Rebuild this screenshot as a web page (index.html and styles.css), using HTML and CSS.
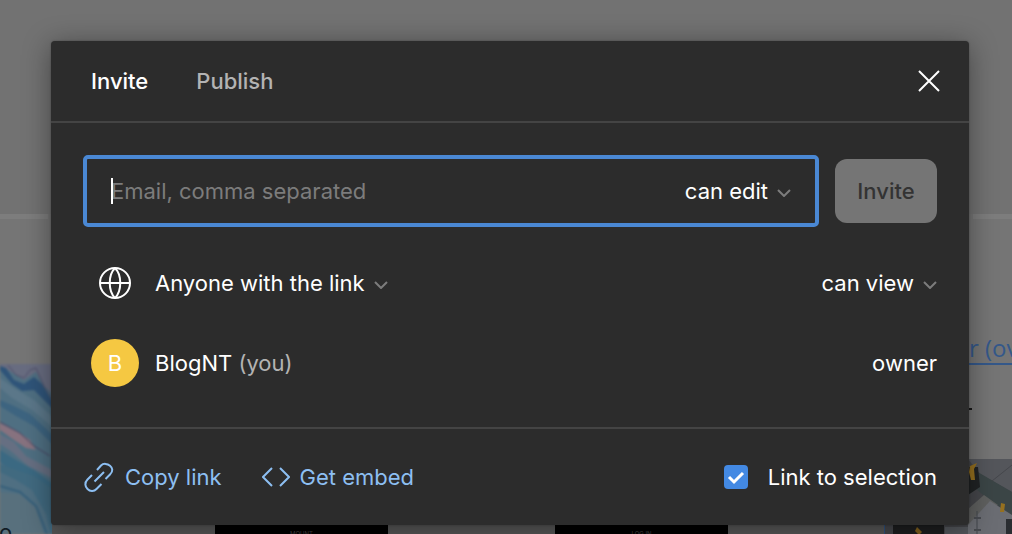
FILE: index.html
```html
<!DOCTYPE html>
<html lang="en">
<head>
<meta charset="utf-8">
<title>Share</title>
<link rel="stylesheet" href="styles.css">
</head>
<body>
<div class="canvas">
  <svg class="artwork artwork-left" width="60" height="170" viewBox="0 0 60 170" aria-hidden="true">
    <rect width="60" height="170" fill="#4f6f82"/>
    <path d="M0 0H60V36L44 22 36 8 24 16 8 6 0 2Z" fill="#686c80"/>
    <path d="M0 2 6 4 14 16 24 20 34 13 42 20 54 40V46L34 26 22 27 12 20 0 6Z" fill="#2f5479"/>
    <path d="M8 1 16 11 24 14 30 6 36 4 44 22 54 38" fill="none" stroke="#50506c"/>
    <path d="M0 14 14 24 34 36 56 56V66L32 46 12 34 0 24Z" fill="#5b7789"/>
    <path d="M0 36 14 42 30 50 56 74V84L34 62 16 52 0 42Z" fill="#3d6480"/>
    <path d="M0 59 18 68 30 76 36 86 26 84 14 76 0 66Z" fill="#87727f"/>
    <path d="M0 58 20 69 34 82 50 92" fill="none" stroke="#4a4461"/>
    <path d="M0 70 14 78 26 92 56 108V116L28 102 12 88 0 80Z" fill="#666f82"/>
    <path d="M0 86 16 96 34 106 56 122V134L34 118 14 108 0 98Z" fill="#3b6982"/>
    <path d="M0 108 16 116 32 126 46 150 50 170H60V130L34 112 0 100Z" fill="#416a80"/>
    <path d="M0 128 20 130 36 144 44 170H0Z" fill="#58707d"/>
    <path d="M0 122 20 128 36 142 47 170" fill="none" stroke="#365f7a" stroke-width="2"/>
  </svg>
  <span class="left-label">o</span>
  <div class="edge edge-left"></div>
  <div class="edge edge-right"></div>
  <a class="page-link" href="#page">r (over</a>
  <span class="page-dash"></span>
  <svg class="artwork artwork-right" width="128" height="75" viewBox="0 0 128 75" aria-hidden="true">
    <rect width="128" height="75" fill="#45464a"/>
    <path d="M0 66V75" stroke="#2f517e" stroke-width="2"/>
    <path d="M84 0H128V33L96 15Z" fill="#54565b"/>
    <path d="m108 22 20-16" stroke="#45474c"/>
    <path d="M92 12 128 33V56L104 40 92 30Z" fill="#3b4546"/>
    <path d="M84 8H94L96 28 84 36Z" fill="#202324"/>
    <path d="M84 50 100 36 114 46 84 66Z" fill="#5f605f"/>
    <path d="M84 66 106 42 128 56V75H84Z" fill="#6b6d73"/>
    <path d="M93 52V75" fill="none" stroke="#45484e"/>
    <path d="M122 60H128V75H122Z" fill="#2a2d31"/>
    <path d="m86 7 7-3-3 6 1 11h-4l-2-8ZM117 44l4 1-1 8h-4Z" fill="#95701f"/>
    <path d="M9 66H60V75H9Z" fill="#1d1e1f"/>
    <path d="m33 68 5 5-3 3-4-4Z" fill="#81601d"/>
    <path d="M61 68H84V75H61Z" fill="#54575c"/>
    <path d="M90 59h7M90 71h7" stroke="#484b50" stroke-width="2"/>
  </svg>
  <div class="lower-shade"></div>
  <div class="thumb thumb-one"><span>MOUNT</span></div>
  <div class="thumb thumb-two"><span>LOG IN</span></div>
</div>

<main class="dialog" role="dialog" aria-label="Share">
  <header class="header">
    <nav class="tabs">
      <button class="tab tab-active" type="button">Invite</button>
      <button class="tab" type="button">Publish</button>
    </nav>
    <button class="close" type="button" aria-label="Close">
      <svg width="24" height="24" viewBox="0 0 24 24"><path d="m2 2 20 20M22 2 2 22"/></svg>
    </button>
  </header>
  <section class="body">
    <form class="invite">
      <div class="field">
        <span class="caret"></span>
        <input class="email" type="text" placeholder="Email, comma separated" aria-label="Email, comma separated">
        <label class="picker">
          <select aria-label="Invite permission"><option>can edit</option></select>
          <svg class="chevron" width="14" height="8" viewBox="0 0 14 8"><path d="m1 1 6 6 6-6"/></svg>
        </label>
      </div>
      <button class="submit" type="button">Invite</button>
    </form>
    <div class="row">
      <span class="symbol">
        <svg class="globe" width="34" height="34" viewBox="0 0 34 34"><circle cx="17" cy="17" r="15"/><path d="M2 17H32M17 2C10 9 10 25 17 32M17 2C24 9 24 25 17 32"/></svg>
      </span>
      <label class="picker">
        <select aria-label="Who has access"><option>Anyone with the link</option></select>
        <svg class="chevron" width="14" height="8" viewBox="0 0 14 8"><path d="m1 1 6 6 6-6"/></svg>
      </label>
      <label class="picker row-end">
        <select aria-label="Link permission"><option>can view</option></select>
        <svg class="chevron" width="14" height="8" viewBox="0 0 14 8"><path d="m1 1 6 6 6-6"/></svg>
      </label>
    </div>
    <div class="row">
      <span class="symbol avatar">B</span>
      <span>BlogNT <span class="muted">(you)</span></span>
      <span class="row-end">owner</span>
    </div>
  </section>
  <footer class="footer">
    <a class="action" href="#copy">
      <svg width="32" height="32" viewBox="0 0 32 32"><path d="M14 9 18 4.500C23-.5 34 7 27 13.500L22.500 18M9 14 4.500 18.500C-2 25 8 34 13.500 28L18.500 23M11.500 20.500 21 11"/></svg>
      Copy link
    </a>
    <a class="action" href="#embed">
      <svg width="28" height="20" viewBox="0 0 28 20"><path d="M10 1 1 10l9 9M18 1l9 9-9 9"/></svg>
      Get embed
    </a>
    <label class="check"><input type="checkbox" checked>Link to selection</label>
  </footer>
</main>
</body>
</html>
```
FILE: styles.css
```css
* { box-sizing: border-box; }
body {
  margin: 0;
  min-height: 100vh;
  padding: 41px 43px 9px 51px;
  overflow: hidden;
  background: #717171;
  color: #fff;
  font-family: Inter, "Liberation Sans", sans-serif;
  font-size: 22px;
  line-height: 32px;
}
button, input, select { font: inherit; color: inherit; }
button { cursor: pointer; }
svg { flex: none; }

.canvas {
  position: absolute;
  inset: 0;
  overflow: hidden;
  background: linear-gradient(#727272 0 214px, #757575 214px);
}
.artwork { position: absolute; }
.artwork-left { left: 0; top: 364px; filter: blur(1px); }
.artwork-right { right: 0; top: 459px; }
.left-label { position: absolute; left: -1px; top: 516px; color: #111c25; font-size: 22px; line-height: 32px; }
.edge { position: absolute; top: 214px; height: 5px; background: #7d7d7d; }
.edge-left { left: 0; width: 48px; }
.edge-right { right: 0; width: 39px; }
.page-link {
  position: absolute;
  left: 969px;
  top: 334px;
  height: 31px;
  border-bottom: 2px solid #34588a;
  color: #34588a;
  font-family: "Open Sans", sans-serif;
  font-size: 24px;
  line-height: 28px;
  text-decoration: none;
  white-space: nowrap;
}
.page-dash { position: absolute; left: 968px; top: 408px; width: 4px; height: 2px; background: #181818; }
.lower-shade {
  position: absolute;
  left: 52px;
  right: 128px;
  bottom: 0;
  height: 20px;
  background: #565656;
}
.thumb {
  position: absolute;
  top: 525px;
  width: 173px;
  height: 20px;
  background: #000;
  color: #444;
  font-size: 6px;
  line-height: 18px;
  text-align: center;
}
.thumb-one { left: 215px; }
.thumb-two { left: 555px; }

.dialog {
  position: relative;
  border-radius: 4px;
  background: #2c2c2c;
  box-shadow: 0 4px 28px rgba(0, 0, 0, .4), 0 0 2px rgba(0, 0, 0, .3);
}
.header {
  display: flex;
  align-items: center;
  justify-content: space-between;
  height: 82px;
  padding: 0 24px 0 40px;
  border-bottom: 2px solid #444;
}
.tabs { display: flex; gap: 48px; }
.tab {
  padding: 0;
  border: 0;
  background: none;
  color: #b3b3b3;
  font-weight: 500;
}
.tab-active { color: #fff; }
.close { display: flex; padding: 4px; border: 0; background: none; }
.close svg { fill: none; stroke: #fff; stroke-width: 2; }

.body { display: grid; gap: 32px; padding: 32px 32px 40px; }
.invite { display: flex; align-items: center; gap: 16px; }
.field {
  position: relative;
  display: flex;
  flex: 1;
  align-items: center;
  height: 72px;
  padding: 0 24px;
  border: 4px solid #4a88d4;
  border-radius: 5px;
}
.caret { position: absolute; left: 24px; top: 19px; width: 2px; height: 26px; background: #fff; }
.email { flex: 1; min-width: 0; padding: 0; border: 0; outline: 0; background: none; }
.email::placeholder { color: #7c7c7c; opacity: 1; }
.picker { display: flex; align-items: center; gap: 9px; }
.picker select {
  padding: 0;
  border: 0;
  outline: 0;
  background: none;
  appearance: none;
  field-sizing: content;
}
.chevron { margin-top: 4px; fill: none; stroke: #7c7c7c; stroke-width: 2; }
.submit {
  width: 102px;
  height: 64px;
  padding: 0;
  border: 0;
  border-radius: 12px;
  background: #757575;
  color: #333;
  font-weight: 500;
}
.row { display: flex; align-items: center; gap: 16px; height: 48px; padding-left: 8px; }
.row-end { margin-left: auto; }
.symbol { display: flex; align-items: center; justify-content: center; width: 48px; height: 48px; }
.globe { fill: none; stroke: #fff; stroke-width: 2; }
.avatar { border-radius: 50%; background: #f5c842; }
.muted { color: #b3b3b3; }
.footer {
  display: flex;
  align-items: center;
  gap: 40px;
  height: 98px;
  padding: 0 32px;
  border-top: 2px solid #444;
}
.action { display: flex; align-items: center; gap: 10px; color: #8dbff2; text-decoration: none; }
.action svg { fill: none; stroke: currentColor; stroke-width: 2; }
.check { display: flex; align-items: center; gap: 20px; margin-left: auto; }
.check input {
  width: 24px;
  height: 24px;
  margin: 0;
  border-radius: 4px;
  appearance: none;
  background: #4389e3 url('data:image/svg+xml,<svg xmlns="http://www.w3.org/2000/svg" viewBox="0 0 24 24"><path d="m5 12 5 5 9-9" fill="none" stroke="white" stroke-width="3"/></svg>') center / 24px no-repeat;
}
```
